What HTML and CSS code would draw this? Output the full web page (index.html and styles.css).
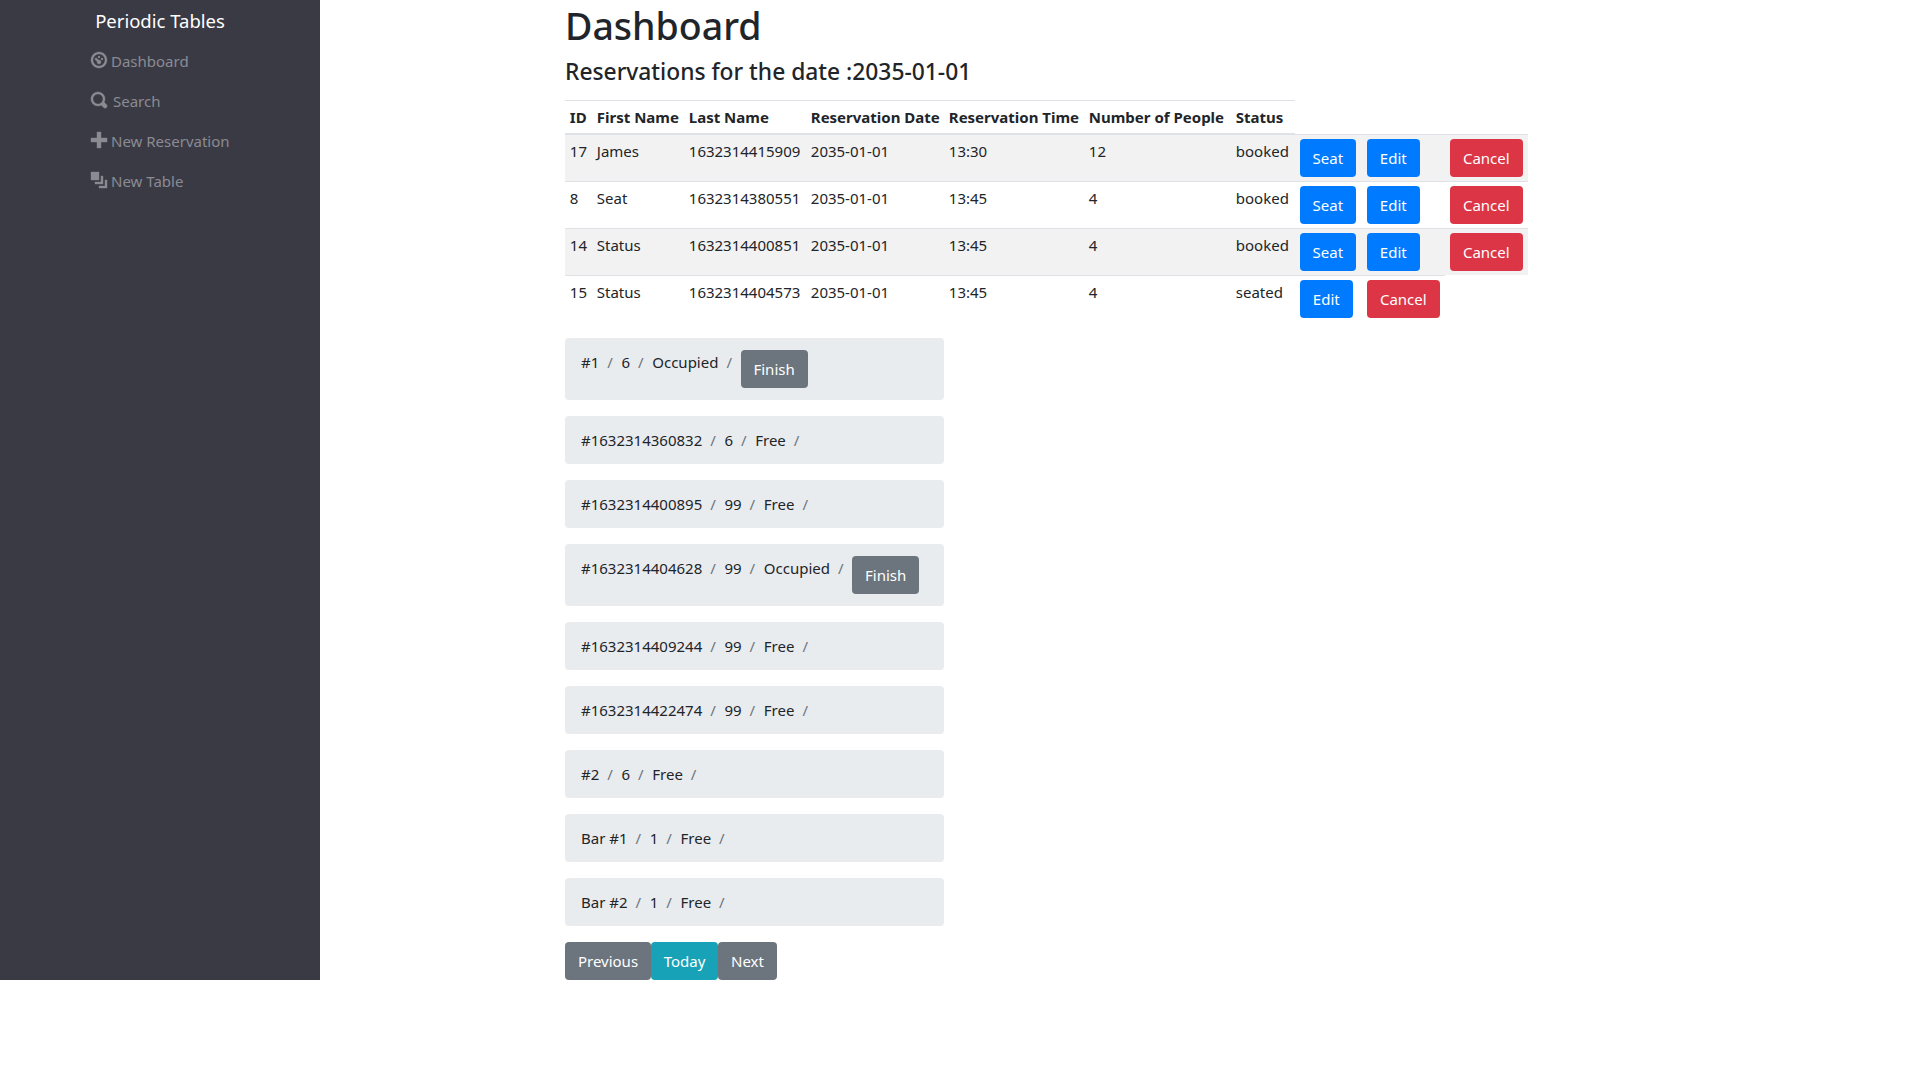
FILE: index.html
```html
<!DOCTYPE html>
<html lang="en">
<head>
    <meta charset="UTF-8">
    <title>Periodic Tables</title>
    <link rel="stylesheet" href="styles.css">
</head>
<body>
    <div class="page">
        <nav class="sidebar">
            <a class="brand" href="#">Periodic Tables</a>
            <ul class="side-nav">
                <li><a href="#"><svg class="icon" viewBox="0 0 8 8"><path d="M4 0c-2.2 0-4 1.8-4 4s1.8 4 4 4 4-1.8 4-4-1.8-4-4-4zm0 1c1.66 0 3 1.34 3 3s-1.34 3-3 3-3-1.34-3-3 1.34-3 3-3zm0 1c-.28 0-.5.22-.5.5s.22.5.5.5.5-.22.5-.5-.22-.5-.5-.5zm-1.66 1a.5.5 0 0 0-.19.84l.91.91c-.02.08-.06.16-.06.25 0 .55.45 1 1 1s1-.45 1-1-.45-1-1-1c-.09 0-.17.04-.25.06l-.91-.91a.5.5 0 0 0-.44-.16.5.5 0 0 0-.06 0zm3.16 0c-.28 0-.5.22-.5.5s.22.5.5.5.5-.22.5-.5-.22-.5-.5-.5z"/></svg>Dashboard</a></li>
                <li><a href="#" class="search-link"><svg class="icon" viewBox="0 0 8 8"><path d="M3.5 0c-1.93 0-3.5 1.57-3.5 3.5s1.57 3.5 3.5 3.5c.59 0 1.17-.14 1.66-.41a1 1 0 0 0 .13.13l1 1a1.02 1.02 0 1 0 1.44-1.44l-1-1a1 1 0 0 0-.16-.13c.27-.49.44-1.06.44-1.66 0-1.93-1.57-3.5-3.5-3.5zm0 1c1.39 0 2.5 1.11 2.5 2.5 0 .66-.24 1.27-.66 1.72-.01.01-.02.02-.03.03a1 1 0 0 0-.13.13c-.44.4-1.04.63-1.69.63-1.39 0-2.5-1.11-2.5-2.5s1.11-2.5 2.5-2.5z"/></svg>Search</a></li>
                <li><a href="#"><svg class="icon" viewBox="0 0 8 8"><path d="M3 0v3h-3v2h3v3h2v-3h3v-2h-3v-3h-2z"/></svg>New Reservation</a></li>
                <li><a href="#"><svg class="icon" viewBox="0 0 8 8"><path d="M0 0v4h4v-4h-4zm5 2v3h-3v1h4v-4h-1zm2 2v3h-3v1h4v-4h-1z"/></svg>New Table</a></li>
            </ul>
        </nav>

        <main class="content">
            <h1>Dashboard</h1>
            <h4>Reservations for the date :2035-01-01</h4>

            <table class="reservations">
                <colgroup>
                    <col class="c-id"><col class="c-first"><col class="c-last"><col class="c-date"><col class="c-time"><col class="c-people"><col class="c-status"><col class="c-a"><col class="c-b"><col class="c-b">
                </colgroup>
                <thead>
                    <tr>
                        <th>ID</th><th>First Name</th><th>Last Name</th><th>Reservation Date</th><th>Reservation Time</th><th>Number of People</th><th>Status</th>
                    </tr>
                </thead>
                <tbody>
                    <tr>
                        <td>17</td><td>James</td><td>1632314415909</td><td>2035-01-01</td><td>13:30</td><td>12</td><td>booked</td>
                        <td><button class="btn btn-blue btn-seat">Seat</button></td>
                        <td><button class="btn btn-blue btn-edit">Edit</button></td>
                        <td><button class="btn btn-red btn-cancel">Cancel</button></td>
                    </tr>
                    <tr>
                        <td>8</td><td>Seat</td><td>1632314380551</td><td>2035-01-01</td><td>13:45</td><td>4</td><td>booked</td>
                        <td><button class="btn btn-blue btn-seat">Seat</button></td>
                        <td><button class="btn btn-blue btn-edit">Edit</button></td>
                        <td><button class="btn btn-red btn-cancel">Cancel</button></td>
                    </tr>
                    <tr>
                        <td>14</td><td>Status</td><td>1632314400851</td><td>2035-01-01</td><td>13:45</td><td>4</td><td>booked</td>
                        <td><button class="btn btn-blue btn-seat">Seat</button></td>
                        <td><button class="btn btn-blue btn-edit">Edit</button></td>
                        <td><button class="btn btn-red btn-cancel">Cancel</button></td>
                    </tr>
                    <tr>
                        <td>15</td><td>Status</td><td>1632314404573</td><td>2035-01-01</td><td>13:45</td><td>4</td><td>seated</td>
                        <td><button class="btn btn-blue btn-edit">Edit</button></td>
                        <td><button class="btn btn-red btn-cancel">Cancel</button></td>
                    </tr>
                </tbody>
            </table>

            <div class="table-list">
                <ol class="crumbs"><li>#1</li><li>6</li><li>Occupied</li><li><button class="btn btn-gray btn-finish">Finish</button></li></ol>
                <ol class="crumbs"><li>#1632314360832</li><li>6</li><li>Free</li><li></li></ol>
                <ol class="crumbs"><li>#1632314400895</li><li>99</li><li>Free</li><li></li></ol>
                <ol class="crumbs"><li>#1632314404628</li><li>99</li><li>Occupied</li><li><button class="btn btn-gray btn-finish">Finish</button></li></ol>
                <ol class="crumbs"><li>#1632314409244</li><li>99</li><li>Free</li><li></li></ol>
                <ol class="crumbs"><li>#1632314422474</li><li>99</li><li>Free</li><li></li></ol>
                <ol class="crumbs"><li>#2</li><li>6</li><li>Free</li><li></li></ol>
                <ol class="crumbs"><li>Bar #1</li><li>1</li><li>Free</li><li></li></ol>
                <ol class="crumbs"><li>Bar #2</li><li>1</li><li>Free</li><li></li></ol>
            </div>

            <div class="date-nav">
                <button class="btn btn-gray btn-prev">Previous</button>
                <button class="btn btn-teal btn-today">Today</button>
                <button class="btn btn-gray btn-next">Next</button>
            </div>
        </main>
    </div>
</body>
</html>
```

FILE: styles.css
```css
body {
    margin: 0;
    font-family: 'Noto Sans', sans-serif;
    font-size: 15px;
    line-height: 24px;
    color: #212529;
    background: #fff;
}

.page {
    display: flex;
    width: 100%;
}

/* sidebar */
.sidebar {
    width: 320px;
    flex-shrink: 0;
    background-color: #3a3a45;
}

.brand {
    display: block;
    height: 41px;
    line-height: 41px;
    text-align: center;
    font-size: 18.5px;
    color: #fff;
    text-decoration: none;
}

.side-nav {
    list-style: none;
    margin: 0;
    padding: 0 0 0 91px;
}

.side-nav a {
    display: flex;
    align-items: center;
    height: 40px;
    color: #8b8b92;
    text-decoration: none;
}

.icon {
    width: 16px;
    height: 16px;
    margin-right: 4px;
    margin-top: -2px;
    fill: currentColor;
    stroke: currentColor;
    stroke-width: 0.2;
    overflow: visible;
}

.search-link .icon {
    margin-right: 6px;
}

/* main column */
.content {
    padding-left: 245px;
}

h1 {
    margin: 0;
    height: 52px;
    font-size: 37.5px;
    font-weight: 500;
    line-height: 52px;
}

h4 {
    margin: 0 0 9px;
    height: 39px;
    font-size: 22.8px;
    font-weight: 500;
    line-height: 39px;
}

/* reservations table */
.reservations {
    width: 963px;
    table-layout: fixed;
    border-collapse: collapse;
    margin-bottom: 16px;
}

.c-id { width: 27px; }
.c-first { width: 92px; }
.c-last { width: 122px; }
.c-date { width: 138px; }
.c-time { width: 140px; }
.c-people { width: 147px; }
.c-status { width: 64px; }
.c-a { width: 67px; }
.c-b { width: 83px; }

.reservations th,
.reservations td {
    padding: 4px 4.8px;
    text-align: left;
    vertical-align: top;
    border-top: 1px solid #dee2e6;
    white-space: nowrap;
}

.reservations th {
    font-weight: 700;
    border-bottom: 2px solid #dee2e6;
}

.reservations tbody tr:nth-child(odd) {
    background-color: #f2f2f2;
}

.reservations .btn {
    display: block;
}

/* table cards */
.crumbs {
    display: flex;
    list-style: none;
    width: 379px;
    box-sizing: border-box;
    margin: 0 0 16px;
    padding: 12px 16px;
    background-color: #e9ecef;
    border-radius: 4px;
}

.crumbs li + li {
    padding-left: 8px;
}

.crumbs li + li::before {
    content: "/";
    float: left;
    padding-right: 8.6px;
    color: #6c757d;
}

/* buttons */
.btn {
    display: inline-block;
    box-sizing: border-box;
    height: 38px;
    padding: 0;
    border: 1px solid transparent;
    border-radius: 4px;
    font-family: inherit;
    font-size: 15px;
    line-height: 24px;
    text-align: center;
    color: #fff;
    cursor: pointer;
}

.btn-blue { background-color: #007bff; }
.btn-red { background-color: #dc3545; }
.btn-gray { background-color: #6c757d; }
.btn-teal { background-color: #17a2b8; }

.btn-seat { width: 56px; }
.btn-edit { width: 53px; }
.btn-cancel { width: 73px; }
.btn-finish { width: 67px; }
.btn-prev { width: 86px; }
.btn-today { width: 67px; }
.btn-next { width: 59px; }

.date-nav {
    display: flex;
}
```
